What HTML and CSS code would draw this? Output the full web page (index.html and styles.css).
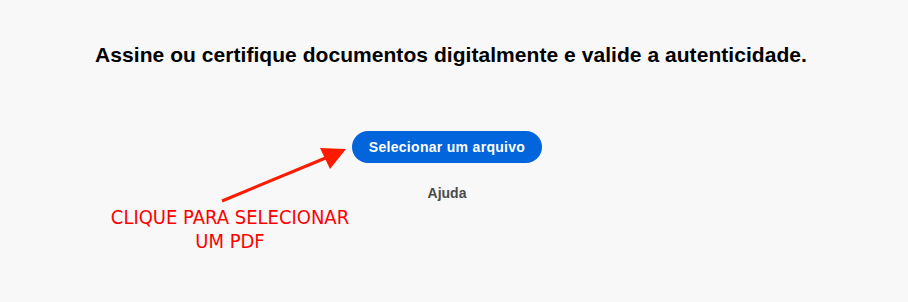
FILE: index.html
```html
<!DOCTYPE html>
<html lang="pt">
<head>
<meta charset="utf-8">
<title>Assinar</title>
<link rel="stylesheet" href="styles.css">
</head>
<body>
<main class="page">
  <h1 class="title">Assine ou certifique documentos digitalmente e valide a autenticidade.</h1>
  <div class="actions">
    <button class="primary">Selecionar um arquivo</button>
    <a class="help">Ajuda</a>
  </div>
</main>
<svg class="arrow" width="908" height="302" viewBox="0 0 908 302">
  <line x1="222" y1="201" x2="328" y2="157" stroke="#ff1a00" stroke-width="3"/>
  <polygon points="346,149 320,148 330,169" fill="#ff1a00"/>
</svg>
<div class="note">CLIQUE PARA SELECIONAR<br>UM PDF</div>
</body>
</html>
```
FILE: styles.css
```css
html, body {
  margin: 0;
  padding: 0;
  background: #f8f8f8;
}
body {
  width: 908px;
  height: 302px;
  position: relative;
  overflow: hidden;
  font-family: "Liberation Sans", Arial, sans-serif;
}
.page {
  display: flex;
  flex-direction: column;
  align-items: center;
  padding: 42px 0 0 0;
  margin-left: -6px;
}
.title {
  margin: 0;
  font-size: 21px;
  line-height: 25px;
  font-weight: 700;
  color: #000;
  letter-spacing: 0.05px;
}
.actions {
  display: flex;
  flex-direction: column;
  align-items: center;
  margin-left: -8px;
}
.primary {
  margin-top: 64px;
  height: 32px;
  padding: 0 17px;
  border: 0;
  border-radius: 16px;
  background: #0265dc;
  color: #fff;
  font-family: "Liberation Sans", Arial, sans-serif;
  font-size: 14px;
  font-weight: 700;
  letter-spacing: 0.3px;
}
.help {
  margin-top: 22px;
  font-size: 14px;
  line-height: 17px;
  font-weight: 700;
  color: #4b4b4b;
}
.arrow {
  position: absolute;
  left: 0;
  top: 0;
}
.note {
  position: absolute;
  left: 100px;
  top: 205px;
  width: 260px;
  text-align: center;
  font-family: "DejaVu Sans Condensed", "DejaVu Sans", sans-serif;
  font-size: 20px;
  line-height: 24px;
  color: #ff0000;
}
```
